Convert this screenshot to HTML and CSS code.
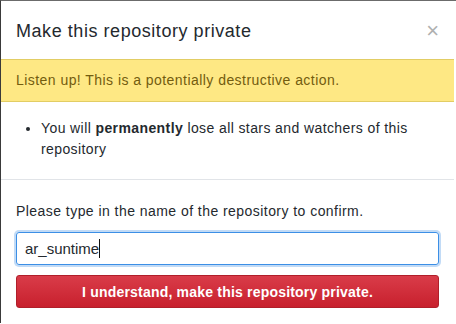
FILE: index.html
```html
<!DOCTYPE html>
<html>
<head>
<meta charset="utf-8">
<link rel="stylesheet" href="styles.css">
</head>
<body>
<div class="backdrop">
  <div class="modal">
    <div class="modal-header">
      <h2 class="modal-title">Make this repository private</h2>
      <span class="close">×</span>
    </div>
    <div class="flash">Listen up! This is a potentially destructive action.</div>
    <div class="modal-body">
      <ul class="warn-list">
        <li>You will <strong>permanently</strong> lose all stars and watchers of this repository</li>
      </ul>
    </div>
    <div class="modal-confirm">
      <p class="prompt">Please type in the name of the repository to confirm.</p>
      <div class="field"><span class="value">ar_suntime</span><span class="caret"></span></div>
      <button class="btn-danger">I understand, make this repository private.</button>
    </div>
  </div>
</div>
</body>
</html>
```
FILE: styles.css
```css
html, body {
  margin: 0;
  padding: 0;
  background: #ffffff;
}
body {
  font-family: "Liberation Sans", Arial, sans-serif;
  color: #24292e;
  width: 456px;
  height: 324px;
  overflow: hidden;
}
.backdrop {
  border-top: 1px solid #6b6b6b;
  border-left: 1px solid #3a3a3a;
  height: 322px;
  background: #ffffff;
}
.modal {
  width: 453px;
  height: 321px;
  background: #fff;
  border-radius: 3px;
  display: flex;
  flex-direction: column;
}
.modal-header {
  display: flex;
  align-items: center;
  justify-content: space-between;
  padding: 18px 15px 15px 15px;
  height: 25px;
}
.modal-title {
  margin: 0;
  font-size: 18px;
  font-weight: normal;
  line-height: 25px;
  letter-spacing: 0.55px;
  color: #24292e;
}
.close {
  font-size: 22px;
  color: #b0b0b0;
  line-height: 20px;
  margin-top: -1px;
}
.flash {
  background: #fee884;
  border-top: 1px solid #e2cd64;
  border-bottom: 1px solid #e2cd64;
  color: #735c0f;
  font-size: 14px;
  line-height: 21px;
  letter-spacing: 0.45px;
  padding: 10px 15px;
}
.modal-body {
  padding: 16px 15px 19px 15px;
  border-bottom: 1px solid #e1e4e8;
}
.warn-list {
  margin: 0;
  padding-left: 25px;
  font-size: 14px;
  line-height: 21px;
  letter-spacing: 0.4px;
}
.warn-list strong {
  font-weight: bold;
}
.modal-confirm {
  padding: 21px 15px 0 15px;
}
.prompt {
  margin: 0 0 10px 0;
  font-size: 14px;
  line-height: 21px;
  letter-spacing: 0.45px;
}
.field {
  height: 31px;
  border: 1px solid #3c8fe6;
  border-radius: 3px;
  box-shadow: 0 0 0 2px rgba(120, 175, 235, 0.45);
  display: flex;
  align-items: center;
  padding: 0 8px;
  font-size: 15px;
  color: #24292e;
  margin-bottom: 10px;
}
.caret {
  display: inline-block;
  width: 1px;
  height: 19px;
  background: #111;
}
.btn-danger {
  display: block;
  width: 100%;
  height: 33px;
  border: 1px solid #b01f2a;
  border-radius: 3px;
  background: linear-gradient(#d93c49, #c8202d);
  color: #fff;
  font-family: "Liberation Sans", Arial, sans-serif;
  font-size: 14px;
  font-weight: bold;
  letter-spacing: 0.2px;
  padding: 0;
}
```
